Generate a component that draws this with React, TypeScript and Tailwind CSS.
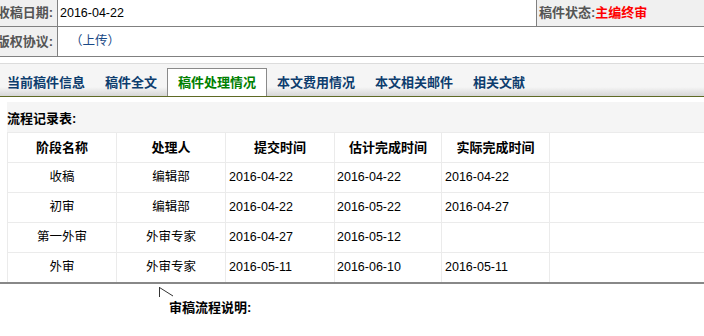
import React from "react";

const font = { fontFamily: '"Liberation Sans", "Noto Sans CJK SC", sans-serif' };

const tabs = ["当前稿件信息", "稿件全文", "稿件处理情况", "本文费用情况", "本文相关邮件", "相关文献"];

const rows = [
  ["收稿", "编辑部", "2016-04-22", "2016-04-22", "2016-04-22"],
  ["初审", "编辑部", "2016-04-22", "2016-05-22", "2016-04-27"],
  ["第一外审", "外审专家", "2016-04-27", "2016-05-12", ""],
  ["外审", "外审专家", "2016-05-11", "2016-06-10", "2016-05-11"],
];

const headers = ["阶段名称", "处理人", "提交时间", "估计完成时间", "实际完成时间", ""];

export default function App() {
  return (
    <div className="w-[704px] h-[336px] bg-white overflow-hidden text-black" style={font}>
      {/* info rows */}
      <div className="h-[63px]">
        <div className="flex h-[27px] border-b border-[#808080]">
          <div className="w-[58px] shrink-0 bg-[#f0f0f0] border-r border-[#808080] flex justify-end items-center overflow-hidden whitespace-nowrap pr-[4px] text-[13px] font-bold text-[#555555]">
            收稿日期:
          </div>
          <div className="flex-1 flex items-center pl-[2px] text-[12.5px]">2016-04-22</div>
          <div className="w-[168px] shrink-0 bg-[#f0f0f0] border-l border-[#808080] flex items-center pl-[2px] text-[13px] font-bold whitespace-nowrap">
            <span className="text-[#555555]">稿件状态:</span>
            <span className="text-[#ff0000]">主编终审</span>
          </div>
        </div>
        <div className="flex h-[30px] border-b border-[#808080]">
          <div className="w-[58px] shrink-0 bg-[#f0f0f0] border-r border-[#808080] flex justify-end items-center overflow-hidden whitespace-nowrap pr-[4px] text-[13px] font-bold text-[#555555]">
            版权协议:
          </div>
          <div className="flex-1 flex items-center pl-[12px] text-[12.5px] text-[#1a4a86]">（上传）</div>
        </div>
      </div>

      {/* tab bar */}
      <div className="border-t border-[#dcdcdc] h-[34px] bg-[linear-gradient(to_bottom,#f5f5f5_0%,#f5f5f5_72%,#d6d6d6_100%)] border-b border-b-[#5f6a24] flex items-end -ml-[3px]">
        {tabs.map((t, i) =>
          i === 2 ? (
            <div
              key={t}
              className="h-[28px] px-[10px] bg-white border border-b-0 border-[#8a8a8a] flex items-center pt-[1px] text-[13px] font-bold text-[#008000] whitespace-nowrap"
            >
              {t}
            </div>
          ) : (
            <div
              key={t}
              className="h-[28px] px-[10px] flex items-center pt-[1px] text-[13px] font-bold text-[#0d3d6e] whitespace-nowrap"
            >
              {t}
            </div>
          )
        )}
      </div>

      {/* panel */}
      <div className="mt-[5px] pl-[7px] border-b-2 border-[#888888]">
        <div className="bg-[#f5f5f5]">
          <div className="h-[30px] flex items-center pt-[3px] text-[13px] font-bold">流程记录表:</div>
          <div className="grid grid-cols-[108px_108px_108px_106px_107px_1fr] gap-px bg-[#ebebeb] pl-px pt-px">
            {headers.map((h, i) => (
              <div key={"h" + i} className="bg-white h-[29px] flex items-center justify-center text-[13px] font-bold whitespace-nowrap">
                {h}
              </div>
            ))}
            {rows.map((r, ri) => (
              <React.Fragment key={ri}>
                <div className="bg-white h-[29px] flex items-center justify-center text-[12.5px]">{r[0]}</div>
                <div className="bg-white h-[29px] flex items-center justify-center text-[12.5px]">{r[1]}</div>
                <div className="bg-white h-[29px] flex items-center pl-[3px] text-[12.5px]">{r[2]}</div>
                <div className="bg-white h-[29px] flex items-center pl-[2px] text-[12.5px]">{r[3]}</div>
                <div className="bg-white h-[29px] flex items-center pl-[3px] text-[12.5px]">{r[4]}</div>
                <div className="bg-white h-[29px]" />
              </React.Fragment>
            ))}
          </div>
        </div>
      </div>

      {/* bottom */}
      <div className="pl-[159px] pt-[3px]">
        <svg width="16" height="11" viewBox="0 0 16 11" className="block">
          <line x1="0.5" y1="0" x2="0.5" y2="10" stroke="#333" strokeWidth="1" />
          <line x1="0.5" y1="0.5" x2="14" y2="9" stroke="#333" strokeWidth="1" />
        </svg>
      </div>
      <div className="pl-[169px] text-[13px] font-bold leading-[20px]">审稿流程说明:</div>
    </div>
  );
}
